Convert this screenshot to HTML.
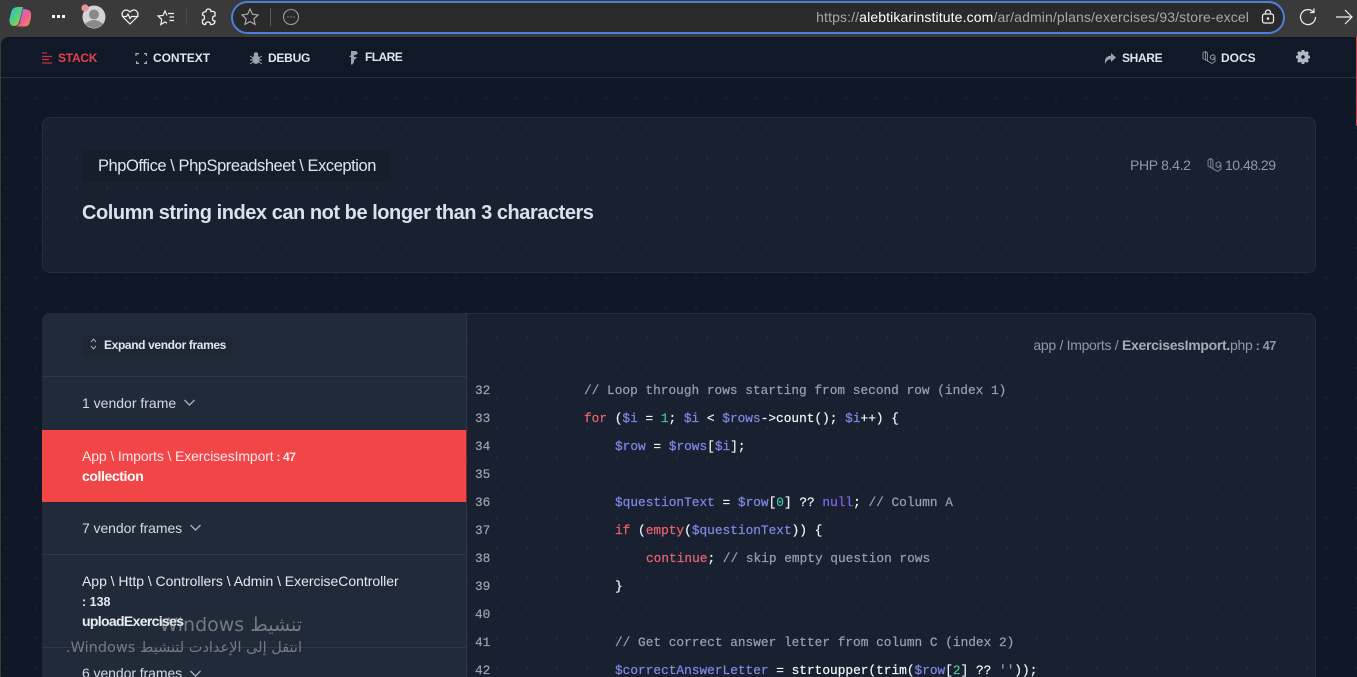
<!DOCTYPE html>
<html lang="en"><head><meta charset="utf-8"><title>Column string index</title>
<style>
*{box-sizing:border-box}
html,body{margin:0;padding:0;width:1357px;height:677px;overflow:hidden;background:#3a3a3a}
body{position:relative;font-family:"Liberation Sans",sans-serif;color:#e2e8f0}
.a{position:absolute;white-space:nowrap}
.dots{background-image:radial-gradient(circle at 1px 1px,rgba(148,163,184,.09) 1px,transparent 1.3px);background-size:30px 30px}
.nav{font-size:12px;font-weight:700;line-height:16px;color:#dfe5ee;letter-spacing:-.25px}
.code{font-family:"Liberation Mono",monospace;font-size:12.8px;line-height:16px;color:#f1f5f9;white-space:pre;-webkit-text-stroke:.2px currentColor}
.num{color:#9aa3b0;font-family:"Liberation Mono",monospace;font-size:12.8px;line-height:16px;left:475px;-webkit-text-stroke:.2px currentColor}
.v{color:#7f8ae6}.c{color:#97a1af}.k{color:#ec6470}.n{color:#44c89a}.p{color:#8168e8}
.side{font-size:14px;line-height:18px;color:#dde3ec}
svg{position:absolute;overflow:visible}
</style></head><body>

<!-- browser bar -->
<svg style="left:8px;top:5px" width="24" height="24" viewBox="0 0 24 24"><defs><linearGradient id="g1" x1="0" y1="0" x2="1" y2="1"><stop offset="0" stop-color="#25b7e8"/><stop offset=".55" stop-color="#5ed06b"/><stop offset="1" stop-color="#f0c93a"/></linearGradient><linearGradient id="g2" x1="0" y1="0" x2="1" y2="1"><stop offset="0" stop-color="#a86be8"/><stop offset=".6" stop-color="#f0608e"/><stop offset="1" stop-color="#f5953c"/></linearGradient></defs><path d="M3 8Q4 2 10 2h5L11 17Q10 21 6 21Q1 21 1.500 14Z" fill="url(#g1)"/><path d="M15 4Q20 4 22 6q1.500 1.500 1 6-1 7-3 8.500-1.500 1-4 1H8Q11 21 12 17Z" fill="url(#g2)"/><path d="M14.500 3L11.500 15q-.3 1 .5 1L15 5Z" fill="#4a62e0"/></svg>
<div class="a" style="left:52px;top:15px;width:3px;height:3px;background:#f5f5f5;box-shadow:5px 0 #f5f5f5,10px 0 #f5f5f5"></div>
<svg style="left:82px;top:5px" width="24" height="24" viewBox="0 0 24 24"><circle cx="12" cy="12" r="11.500" fill="#d4d2d2"/><circle cx="12" cy="9.500" r="5" fill="#8a8888"/><path d="M3 19q9-8 18 0q-9 8-18 0Z" fill="#8a8888"/><circle cx="3" cy="3" r="3.600" fill="#e8959e"/></svg>
<svg style="left:121px;top:8px" width="18" height="18" viewBox="0 0 18 18" fill="none" stroke="#f2f2f2" stroke-width="1.200"><path d="M9 16L2.500 9.500Q-.5 6 2.500 3q3-2.500 6.500 1q3.500-3.500 6.500-1q3 3 0 6.500Z"/><path d="M1 8.500h4.500l1.500-2.500 2 4.500 1.500-2h7"/></svg>
<svg style="left:157px;top:8px" width="18" height="18" viewBox="0 0 18 18" fill="none" stroke="#f2f2f2" stroke-width="1.200"><path d="M10 7.500L8 3 6 7.500 1 8 4.800 11.500 3.800 16.500 8 14 10 15.200"/><path d="M11 5.500H17M12.500 9H17M12.500 12.500H17"/></svg>
<div class="a" style="left:186px;top:9px;width:1px;height:16px;background:#4c4c4c"></div>
<svg style="left:200px;top:8px" width="18" height="18" viewBox="0 0 18 18" fill="none" stroke="#f2f2f2" stroke-width="1.300"><path d="M6 3.500Q6 1 8.500 1T11 3.500Q14 3 15 4.500V8Q12.500 8 12.500 10.500T15 13Q15 16 12 16.500H10.500Q10.500 14 8 14T5.500 16.500Q3 16.500 2.500 15V12Q4.500 12 4.500 9.500T2.500 7Q2 4 6 3.500Z"/></svg>
<div class="a" style="left:231px;top:1px;width:1054px;height:33px;border-radius:17px;background:#2a2a2a;border:2px solid #4a80dc"></div>
<svg style="left:241px;top:8px" width="18" height="18" viewBox="0 0 18 18" fill="none" stroke="#a9a9a9" stroke-width="1.200"><path d="M9 1l2.400 5.200 5.600.7-4.100 3.900 1.100 5.600L9 13.600l-5 2.800 1.100-5.600L1 6.900l5.600-.7Z"/></svg>
<div class="a" style="left:270px;top:8px;width:1px;height:18px;background:#5a5a5a"></div>
<svg style="left:283px;top:9px" width="16" height="16" viewBox="0 0 16 16" fill="none" stroke="#9a9a9a" stroke-width="1.100"><circle cx="8" cy="8" r="7.500"/><path d="M4.500 8h1M7.500 8h1M10.500 8h1" stroke-width="1.400"/></svg>
<div class="a" style="right:108px;top:9px;font-size:14px;line-height:17px;color:#a8a8a8;letter-spacing:.125px">https://<span style="color:#fff">alebtikarinstitute.com</span>/ar/admin/plans/exercises/93/store-excel</div>
<svg style="left:1261px;top:9px" width="14" height="15" viewBox="0 0 14 15" fill="none" stroke="#f0f0f0" stroke-width="1.200"><rect x="1.500" y="5" width="11" height="9" rx="2"/><path d="M4.500 5V3.500a2.500 2.500 0 0 1 5 0V5"/><circle cx="7" cy="9.500" r=".7" fill="#f0f0f0"/></svg>
<svg style="left:1299px;top:8px" width="18" height="18" viewBox="0 0 18 18" fill="none" stroke="#f0f0f0" stroke-width="1.200"><path d="M14.500 4A7.500 7.500 0 1 0 16.500 9"/><path d="M15 .5V4.500H11"/></svg>
<svg style="left:1336px;top:9px" width="17" height="16" viewBox="0 0 17 16" fill="none" stroke="#f0f0f0" stroke-width="1.200"><path d="M0 8H16M9 1l7 7-7 7"/></svg>

<!-- page -->
<div class="a dots" style="left:1px;top:37px;width:1356px;height:640px;background-color:#101727;border-radius:8px 0 0 0;background-position:4px 0"></div>
<div class="a" style="left:1px;top:37px;width:1356px;height:41px;background:#111827;border-bottom:1px solid #263040;border-radius:8px 0 0 0"></div>
<div class="a" style="left:1356px;top:37px;width:1px;height:89px;background:#d0454f"></div>

<!-- nav -->
<svg style="left:42px;top:52px" width="11" height="12" viewBox="0 0 11 12" stroke="#c9303d" stroke-width="1.300"><path d="M0 1h5M0 4.500h10M0 7.500h7M0 11h10"/></svg>
<div class="a nav" style="left:58px;top:50px;color:#e5404c">STACK</div>
<svg style="left:136px;top:53px" width="11" height="11" viewBox="0 0 11 11" fill="none" stroke="#a5adb9" stroke-width="1.200"><path d="M0 3V.6H3M8 .6h2.400V3M10.400 8v2.400H8M3 10.400H.6V8"/></svg>
<div class="a nav" style="left:153px;top:50px;letter-spacing:-.05px">CONTEXT</div>
<svg style="left:250px;top:52px" width="12" height="13" viewBox="0 0 12 13" fill="#9aa3ae" stroke="#9aa3ae"><ellipse cx="6" cy="7.500" rx="3.200" ry="4"/><circle cx="6" cy="2.500" r="1.800"/><path d="M0 4l3 2M12 4L9 6M0 8h3M12 8H9M0 12l3-2M12 12l-3-2" fill="none"/></svg>
<div class="a nav" style="left:268px;top:50px">DEBUG</div>
<svg style="left:349px;top:50px" width="9" height="15" viewBox="0 0 9 15" fill="#9aa3ae"><path d="M2 1h5l2 2-2 2H5v2h3L6 9.500H5V12l-2 3-1-1V7H0l2-2Z"/></svg>
<div class="a nav" style="left:365px;top:49px;letter-spacing:-.55px">FLARE</div>
<svg style="left:1104px;top:53px" width="12" height="11" viewBox="0 0 12 11" fill="#9aa3ae"><path d="M7 0l5 4.500L7 9V6.200Q3 6 1 11 0 3 7 2.800Z"/></svg>
<div class="a nav" style="left:1122px;top:50px;letter-spacing:-.35px">SHARE</div>
<svg style="left:1202px;top:51px" width="14" height="14" viewBox="0 0 13 14" fill="none" stroke="#8e97a3" stroke-width=".9"><path d="M.5 1.500L3 .5 5 2V10L9.500 12.500 12.500 10.500V7.500L10.500 6.500M5 10L.5 7.500V1.500M3 .5V9M8 5l2.500-1.500L12.500 5v2.500L10 9 8 7.500Z"/></svg>
<div class="a nav" style="left:1221px;top:50px;letter-spacing:0">DOCS</div>
<svg style="left:1296px;top:50px" width="14" height="14" viewBox="0 0 14 14"><circle cx="7" cy="7" r="3.700" fill="none" stroke="#b0b8c4" stroke-width="4"/><path d="M7 0v2M7 12v2M0 7h2M12 7h2M2 2l1.500 1.500M10.500 10.500L12 12M12 2l-1.500 1.500M3.500 10.500L2 12" stroke="#b0b8c4" stroke-width="2.800"/></svg>

<!-- header card -->
<div class="a dots" style="left:42px;top:117px;width:1274px;height:156px;background-color:#192130;border:1px solid #252e3d;border-radius:8px;background-position:3px 9px"></div>
<div class="a" style="left:82px;top:150px;width:309px;height:32px;background:#161d2b;border-radius:3px"></div>
<div class="a" style="left:98px;top:156px;font-size:16.500px;line-height:20px;color:#dfe5ee;letter-spacing:-.45px">PhpOffice \ PhpSpreadsheet \ Exception</div>
<div class="a" style="left:82px;top:201px;font-size:20px;line-height:24px;font-weight:700;color:#dbe1ec;letter-spacing:-.46px">Column string index can not be longer than 3 characters</div>
<div class="a" style="left:1130px;top:156px;font-size:14px;line-height:18px;color:#8f98a6;letter-spacing:-.33px">PHP 8.4.2</div>
<svg style="left:1207px;top:158px" width="15" height="15" viewBox="0 0 13 14" fill="none" stroke="#7f8896" stroke-width=".9"><path d="M.5 1.500L3 .5 5 2V10L9.500 12.500 12.500 10.500V7.500L10.500 6.500M5 10L.5 7.500V1.500M3 .5V9M8 5l2.500-1.500L12.500 5v2.500L10 9 8 7.500Z"/></svg>
<div class="a" style="left:1225px;top:156px;font-size:14px;line-height:18px;color:#8f98a6;letter-spacing:-.5px">10.48.29</div>

<!-- main card -->
<div class="a dots" style="left:42px;top:313px;width:1274px;height:380px;background-color:#192130;border:1px solid #252e3d;border-radius:8px;background-position:3px 23px"></div>
<div class="a" style="left:42px;top:313px;width:425px;height:364px;background:#212a38;border-right:1px solid #2c3646;border-radius:8px 0 0 0"></div>
<div class="a" style="left:42px;top:376px;width:424px;height:1px;background:#2e3848"></div>
<div class="a" style="left:82px;top:335px;width:150px;height:22px;background:#1f2735;border-radius:3px"></div>
<svg style="left:90px;top:338px" width="7" height="12" viewBox="0 0 7 12" fill="none" stroke="#a3abb7"><path d="M1 4l2.500-3L6 4M1 8l2.500 3L6 8"/></svg>
<div class="a" style="left:104px;top:338px;font-size:12px;line-height:15px;font-weight:700;color:#dfe5ee;letter-spacing:-.37px">Expand vendor frames</div>

<div class="a side" style="left:82px;top:394px;letter-spacing:0;color:#d3dae4">1 vendor frame</div>
<svg style="left:184px;top:399px" width="11" height="7" viewBox="0 0 11 7" fill="none" stroke="#a6afba" stroke-width="1.400"><path d="M.5 1l5 5 5-5"/></svg>

<div class="a" style="left:42px;top:430px;width:424px;height:72px;background:#f24548"></div>
<div class="a side" style="left:82px;top:447px;color:#fde8e8;letter-spacing:-.12px">App \ Imports \ ExercisesImport<span style="font-size:12px;font-weight:700;letter-spacing:-.4px"> : 47</span></div>
<div class="a side" style="left:82px;top:467px;font-weight:700;color:#fff;letter-spacing:-.4px">collection</div>
<div class="a" style="left:466px;top:430px;width:1px;height:72px;background:#7a2a34"></div>

<div class="a side" style="left:82px;top:519px;letter-spacing:-.07px;color:#d3dae4">7 vendor frames</div>
<svg style="left:190px;top:524px" width="11" height="7" viewBox="0 0 11 7" fill="none" stroke="#a6afba" stroke-width="1.400"><path d="M.5 1l5 5 5-5"/></svg>
<div class="a" style="left:42px;top:554px;width:424px;height:1px;background:#2e3848"></div>
<div class="a side" style="left:82px;top:572px;letter-spacing:-.03px;color:#e4e9f1">App \ Http \ Controllers \ Admin \ ExerciseController</div>
<div class="a side" style="left:82px;top:593px;font-size:12.500px;font-weight:700;color:#e4e9f1">: 138</div>
<div class="a side" style="left:82px;top:612px;font-weight:700;color:#e8ecf3;letter-spacing:-.66px">uploadExercises</div>
<div class="a" style="left:42px;top:647px;width:424px;height:1px;background:#2e3848"></div>
<div class="a side" style="left:82px;top:664px;letter-spacing:-.07px;color:#d3dae4">6 vendor frames</div>
<svg style="left:190px;top:670px" width="11" height="7" viewBox="0 0 11 7" fill="none" stroke="#a6afba" stroke-width="1.400"><path d="M.5 1l5 5 5-5"/></svg>

<!-- file path -->
<div class="a" style="right:81px;top:336px;font-size:14px;line-height:18px;color:#8f98a6;letter-spacing:-.3px">app / Imports / <b style="color:#a4acb9">ExercisesImport.</b>php<span style="font-size:12.500px;font-weight:700"> : 47</span></div>

<!-- code -->
<div class="a num" style="top:383px">32</div><div class="a code" style="left:584px;top:383px"><span class="c">// Loop through rows starting from second row (index 1)</span></div>
<div class="a num" style="top:411px">33</div><div class="a code" style="left:584px;top:411px"><span class="k">for</span> (<span class="v">$i</span> = <span class="n">1</span>; <span class="v">$i</span> &lt; <span class="v">$rows</span>-&gt;count(); <span class="v">$i</span>++) {</div>
<div class="a num" style="top:439px">34</div><div class="a code" style="left:615px;top:439px"><span class="v">$row</span> = <span class="v">$rows</span>[<span class="v">$i</span>];</div>
<div class="a num" style="top:467px">35</div>
<div class="a num" style="top:495px">36</div><div class="a code" style="left:615px;top:495px"><span class="v">$questionText</span> = <span class="v">$row</span>[<span class="n">0</span>] ?? <span class="p">null</span>; <span class="c">// Column A</span></div>
<div class="a num" style="top:523px">37</div><div class="a code" style="left:615px;top:523px"><span class="k">if</span> (<span class="k">empty</span>(<span class="v">$questionText</span>)) {</div>
<div class="a num" style="top:551px">38</div><div class="a code" style="left:646px;top:551px"><span class="k">continue</span>; <span class="c">// skip empty question rows</span></div>
<div class="a num" style="top:579px">39</div><div class="a code" style="left:615px;top:579px">}</div>
<div class="a num" style="top:607px">40</div>
<div class="a num" style="top:635px">41</div><div class="a code" style="left:615px;top:635px"><span class="c">// Get correct answer letter from column C (index 2)</span></div>
<div class="a num" style="top:663px">42</div><div class="a code" style="left:615px;top:663px"><span class="v">$correctAnswerLetter</span> = strtoupper(trim(<span class="v">$row</span>[<span class="n">2</span>] ?? <span class="c">''</span>));</div>

<!-- watermark -->
<div class="a" dir="rtl" style="right:1055px;top:612px;font-family:'DejaVu Sans',sans-serif;font-size:19px;line-height:26px;color:rgba(200,200,200,.5)">تنشيط Windows</div>
<div class="a" dir="rtl" style="right:1055px;top:638px;font-family:'DejaVu Sans',sans-serif;font-size:14.500px;line-height:20px;color:rgba(200,200,200,.5)">انتقل إلى الإعدادت لتنشيط Windows.</div>
</body></html>
